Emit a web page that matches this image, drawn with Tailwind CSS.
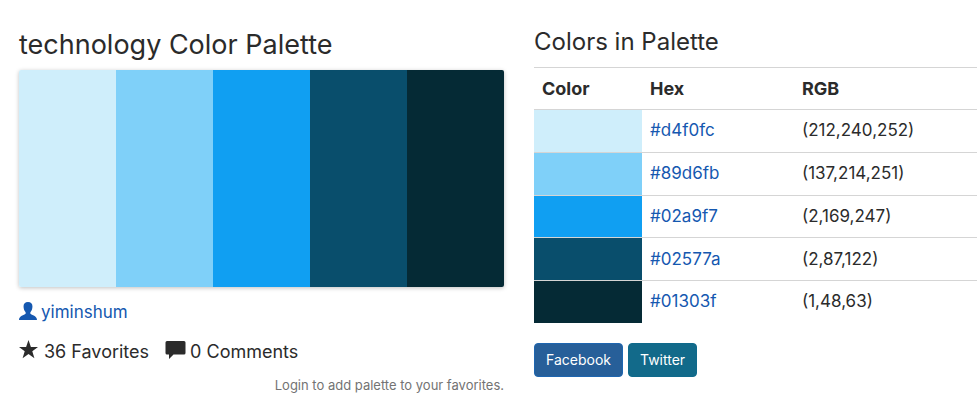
<!DOCTYPE html>
<html lang="en">
<head>
<meta charset="utf-8">
<meta name="viewport" content="width=device-width, initial-scale=1">
<title>technology Color Palette</title>
<script src="https://cdn.jsdelivr.net/npm/@tailwindcss/browser@4"></script>
</head>
<body class="bg-white font-['Inter',sans-serif] text-[17px] text-[#2b2b2b]">
<main class="grid grid-cols-[485fr_443fr] items-start gap-[30px] pl-[19px]">
  <section class="pt-7">
    <h1 class="text-[27px] leading-[34px]">technology Color Palette</h1>
    <div class="mt-2 grid h-[217px] grid-cols-5 overflow-hidden rounded-xs shadow-[0_1px_4px_rgba(0,0,0,0.25)]">
      <div class="bg-[#cfeefb]"></div>
      <div class="bg-[#7fd0f9]"></div>
      <div class="bg-[#109ff2]"></div>
      <div class="bg-[#094e6c]"></div>
      <div class="bg-[#052a35]"></div>
    </div>
    <a href="#" class="mt-3 flex items-center gap-1 leading-[27px] text-[#1558b0]">
      <svg class="mb-1 h-[18px] w-[18px] shrink-0" viewBox="0 0 19 19" fill="currentColor" aria-hidden="true"><path d="M9.500 0C12.600 0 14.200 1.800 14.200 4.600C14.200 7.400 13.400 9.400 12 10.700V12.300C13.500 14 19 14.300 19 19H0C0 14.300 5.500 14 7 12.300V10.700C5.600 9.400 4.800 7.400 4.800 4.600C4.800 1.800 6.400 0 9.500 0Z"/></svg>
      <span>yiminshum</span>
    </a>
    <div class="mt-3 flex items-center gap-4 text-lg leading-[27px]">
      <span class="flex items-center gap-1.5"><svg class="mb-1 size-[19px] shrink-0" viewBox="0 0 19 19" fill="currentColor" aria-hidden="true"><path d="M9.500 0L11.900 6.900H19L13.300 11.200L15.400 18.200L9.500 14L3.600 18.200L5.700 11.200L0 6.900H7.100Z"/></svg>36 Favorites</span>
      <span class="flex items-center gap-1"><svg class="mb-1 h-[19px] w-[21px] shrink-0" viewBox="0 0 21 19" fill="currentColor" aria-hidden="true"><path d="M2 1H19Q20.500 1 20.500 2.500V13Q20.500 14.500 19 14.500H8.500L4 19V14.500H2Q.500 14.500 .500 13V2.500Q.500 1 2 1Z"/></svg>0 Comments</span>
    </div>
    <p class="mt-2.5 text-right text-[13px] leading-5 text-[#737373]">Login to add palette to your favorites.</p>
  </section>
  <section class="pt-[26px]">
    <h2 class="text-2xl leading-8">Colors in Palette</h2>
    <table class="mt-[9px] h-64 w-full table-fixed border-separate border-spacing-0 text-left [&_td]:h-[42px] [&_td]:border-t [&_td]:border-[#d5d5d5] [&_td]:px-2 [&_th]:h-[42px] [&_th]:border-t [&_th]:border-[#d5d5d5] [&_th]:px-2">
      <thead class="text-lg">
        <tr><th class="w-[108px]">Color</th><th class="w-[152px]">Hex</th><th>RGB</th></tr>
      </thead>
      <tbody class="[&_a]:text-[#1558b0]">
        <tr><td class="bg-[#cfeefb]"></td><td><a href="#">#d4f0fc</a></td><td>(212,240,252)</td></tr>
        <tr><td class="bg-[#7fd0f9]"></td><td><a href="#">#89d6fb</a></td><td>(137,214,251)</td></tr>
        <tr><td class="bg-[#109ff2]"></td><td><a href="#">#02a9f7</a></td><td>(2,169,247)</td></tr>
        <tr><td class="bg-[#094e6c]"></td><td><a href="#">#02577a</a></td><td>(2,87,122)</td></tr>
        <tr><td class="bg-[#052a35]"></td><td><a href="#">#01303f</a></td><td>(1,48,63)</td></tr>
      </tbody>
    </table>
    <div class="mt-5 flex gap-[5px] text-sm text-white">
      <button type="button" class="h-[34px] rounded border border-[#1e66b0] bg-[#275f99] px-[11px]">Facebook</button>
      <button type="button" class="h-[34px] rounded border border-[#0f6a8c] bg-[#126a8a] px-[11px]">Twitter</button>
    </div>
  </section>
</main>
</body>
</html>
